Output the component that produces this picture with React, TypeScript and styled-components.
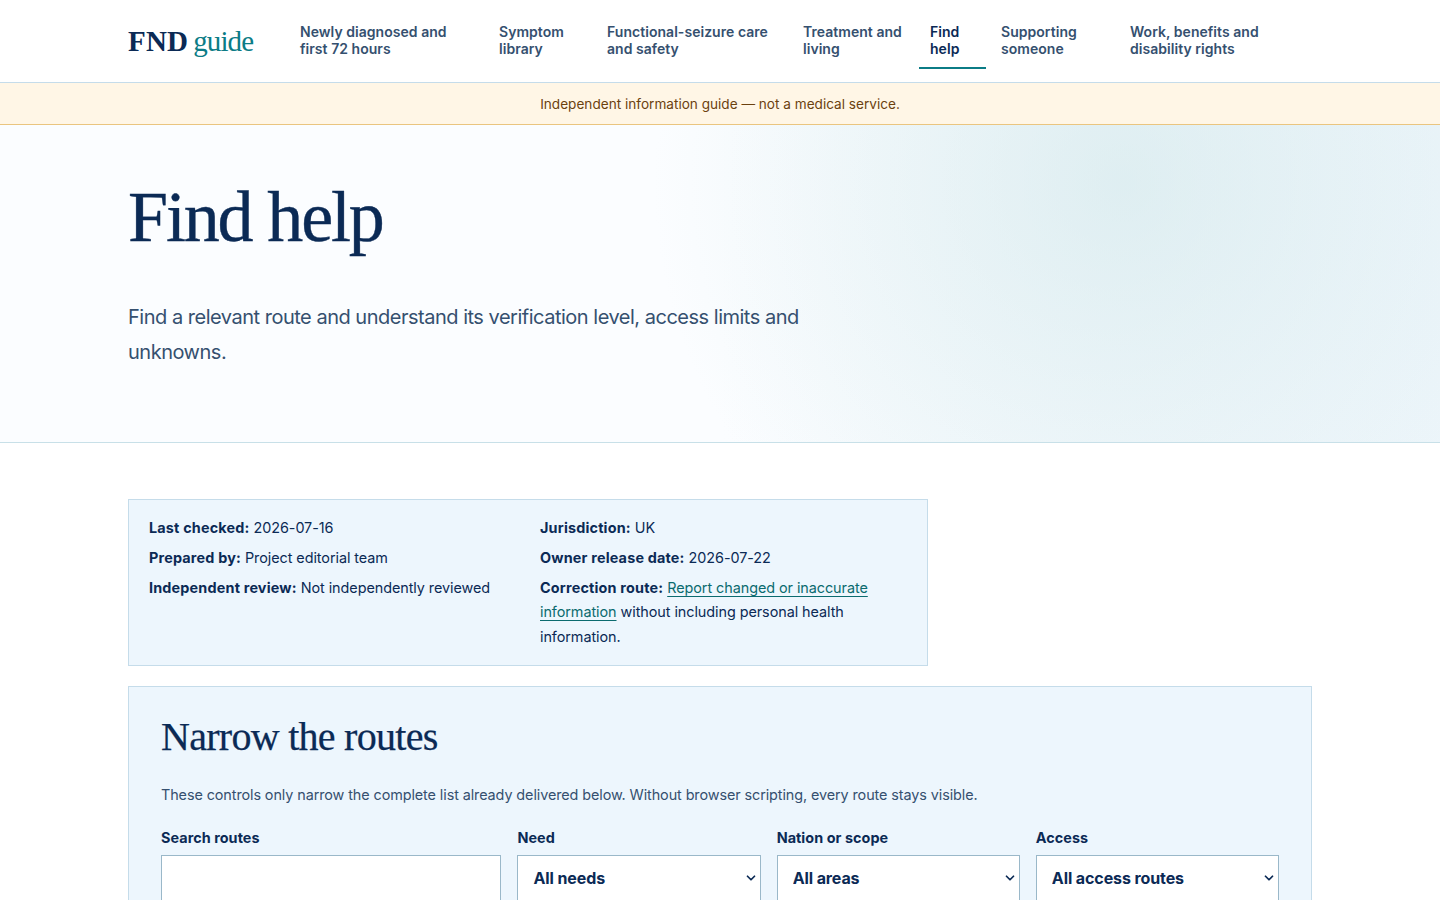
import React from "react";
import styled, { createGlobalStyle } from "styled-components";
import { ChevronDown } from "lucide-react";

const Global = createGlobalStyle`
  * { box-sizing: border-box; }
  html, body { margin: 0; padding: 0; background: #fff; }
  body { font-family: Inter, "Liberation Sans", sans-serif; color: #0b2a55; }
  #root { height: 900px; overflow: hidden; }
`;

const serif = `"Liberation Serif", "Times New Roman", serif`;

const Header = styled.header`
  height: 83px;
  border-bottom: 1px solid #c5dcea;
  padding: 0 128px;
  display: flex;
  align-items: flex-start;
  background: #fff;
`;
const Logo = styled.a`
  width: 161px;
  height: 82px;
  display: flex;
  align-items: center;
  gap: 5px;
  font-family: ${serif};
  font-size: 29px;
  text-decoration: none;
`;
const LogoMark = styled.span`
  color: #0b2a55;
  font-weight: 700;
  letter-spacing: 0.2px;
`;
const LogoWord = styled.span`
  color: #0b7c86;
  letter-spacing: -0.9px;
`;
const Nav = styled.nav`
  display: flex;
  gap: 4px;
  padding-top: 13px;
`;
const NavItem = styled.a<{ $w: number; $active?: boolean }>`
  width: ${(p) => p.$w}px;
  height: 56px;
  padding: 10px 11px 0;
  font-size: 14px;
  line-height: 17px;
  font-weight: 600;
  letter-spacing: 0.04px;
  color: ${(p) => (p.$active ? "#0b2a55" : "#35506f")};
  border-bottom: 2px solid ${(p) => (p.$active ? "#0b7c86" : "transparent")};
  text-decoration: none;
`;
const Banner = styled.div`
  height: 42px;
  background: #fff6e6;
  border-bottom: 1px solid #eac57f;
  color: #6b410f;
  font-size: 13.6px;
  display: flex;
  align-items: center;
  justify-content: center;
`;
const Hero = styled.section`
  height: 318px;
  border-bottom: 1px solid #c8e0e8;
  padding: 56px 128px 0;
  background:
    radial-gradient(circle 470px at 78% 18%, rgba(205, 229, 232, 0.55), rgba(205, 229, 232, 0) 100%),
    linear-gradient(90deg, #fbfdff 0%, #fbfdff 50%, #eef6fb 100%);
`;
const Title = styled.h1`
  margin: 0;
  font-family: ${serif};
  font-weight: 400;
  font-size: 72px;
  line-height: 72px;
  letter-spacing: -2.15px;
  -webkit-text-stroke: 0.4px #0b2a55;
  color: #0b2a55;
`;
const Lead = styled.p`
  margin: 47px 0 0;
  width: 720px;
  font-size: 20px;
  line-height: 35px;
  letter-spacing: -0.49px;
  color: #35506f;
`;
const Main = styled.main`
  padding: 56px 128px 0;
`;
const Meta = styled.div`
  width: 800px;
  padding: 16px 20px;
  background: #edf6fd;
  border: 1px solid #c5dcea;
  display: grid;
  grid-template-columns: 1fr 1fr;
  column-gap: 24px;
  font-size: 14.4px;
  line-height: 24.4px;
  letter-spacing: -0.06px;
  color: #0b2a55;
`;
const MetaColumn = styled.div`
  display: flex;
  flex-direction: column;
  gap: 5.6px;
`;
const MetaLine = styled.div``;
const MetaKey = styled.b`
  font-weight: 700;
  letter-spacing: 0.18px;
`;
const TextLink = styled.a`
  color: #0b6b6f;
  text-decoration: underline;
  text-underline-offset: 3px;
`;
const Panel = styled.section`
  margin-top: 20px;
  padding: 24px 32px 32px;
  background: #edf6fd;
  border: 1px solid #c5dcea;
`;
const PanelTitle = styled.h2`
  margin: 0;
  font-family: ${serif};
  font-weight: 400;
  font-size: 40px;
  line-height: 52px;
  letter-spacing: -0.72px;
  -webkit-text-stroke: 0.25px #0b2a55;
  color: #0b2a55;
`;
const PanelText = styled.p`
  margin: 20px 0 0;
  font-size: 14.4px;
  line-height: 24.5px;
  letter-spacing: -0.09px;
  color: #35506f;
`;
const Filters = styled.div`
  margin-top: 21px;
  display: grid;
  grid-template-columns: 1.4fr 1fr 1fr 1fr;
  gap: 16px;
`;
const Field = styled.label`
  display: flex;
  flex-direction: column;
  gap: 9px;
  font-size: 14.4px;
  line-height: 17px;
  font-weight: 700;
  letter-spacing: 0.05px;
  color: #0b2a55;
`;
const Input = styled.input`
  height: 46px;
  border: 1px solid #9ab8c9;
  border-radius: 0;
  background: #fff;
  padding: 0 16px;
`;
const SelectWrap = styled.div`
  position: relative;
`;
const Select = styled.select`
  width: 100%;
  height: 46px;
  appearance: none;
  border: 1px solid #9ab8c9;
  border-radius: 0;
  background: #fff;
  padding: 0 15px;
  font-family: inherit;
  font-size: 16px;
  font-weight: 700;
  letter-spacing: -0.1px;
  color: #0b2a55;
`;
const Chevron = styled(ChevronDown)`
  position: absolute;
  right: 3px;
  top: 16px;
  width: 14px;
  height: 14px;
  color: #0b2a55;
  stroke-width: 3;
  pointer-events: none;
`;

const navItems = [
  ["Newly diagnosed and first 72 hours", 195],
  ["Symptom library", 104],
  ["Functional-seizure care and safety", 192],
  ["Treatment and living", 123],
  ["Find help", 67],
  ["Supporting someone", 125],
  ["Work, benefits and disability rights", 193],
] as const;

const selects = [
  ["Need", "All needs"],
  ["Nation or scope", "All areas"],
  ["Access", "All access routes"],
];

export default function App() {
  return (
    <>
      <Global />
      <Header>
        <Logo href="#">
          <LogoMark>FND</LogoMark>
          <LogoWord>guide</LogoWord>
        </Logo>
        <Nav>
          {navItems.map(([label, w]) => (
            <NavItem key={label} href="#" $w={w} $active={label === "Find help"}>
              {label}
            </NavItem>
          ))}
        </Nav>
      </Header>
      <Banner>Independent information guide — not a medical service.</Banner>
      <Hero>
        <Title>Find help</Title>
        <Lead>Find a relevant route and understand its verification level, access limits and unknowns.</Lead>
      </Hero>
      <Main>
        <Meta>
          <MetaColumn>
            <MetaLine><MetaKey>Last checked:</MetaKey> 2026-07-16</MetaLine>
            <MetaLine><MetaKey>Prepared by:</MetaKey> Project editorial team</MetaLine>
            <MetaLine><MetaKey>Independent review:</MetaKey> Not independently reviewed</MetaLine>
          </MetaColumn>
          <MetaColumn>
            <MetaLine><MetaKey>Jurisdiction:</MetaKey> UK</MetaLine>
            <MetaLine><MetaKey>Owner release date:</MetaKey> 2026-07-22</MetaLine>
            <MetaLine>
              <MetaKey>Correction route:</MetaKey> <TextLink href="#">Report changed or inaccurate information</TextLink> without including personal health information.
            </MetaLine>
          </MetaColumn>
        </Meta>
        <Panel>
          <PanelTitle>Narrow the routes</PanelTitle>
          <PanelText>These controls only narrow the complete list already delivered below. Without browser scripting, every route stays visible.</PanelText>
          <Filters>
            <Field>
              Search routes
              <Input type="search" />
            </Field>
            {selects.map(([label, value]) => (
              <Field key={label}>
                {label}
                <SelectWrap>
                  <Select defaultValue={value}>
                    <option>{value}</option>
                  </Select>
                  <Chevron />
                </SelectWrap>
              </Field>
            ))}
          </Filters>
        </Panel>
      </Main>
    </>
  );
}
